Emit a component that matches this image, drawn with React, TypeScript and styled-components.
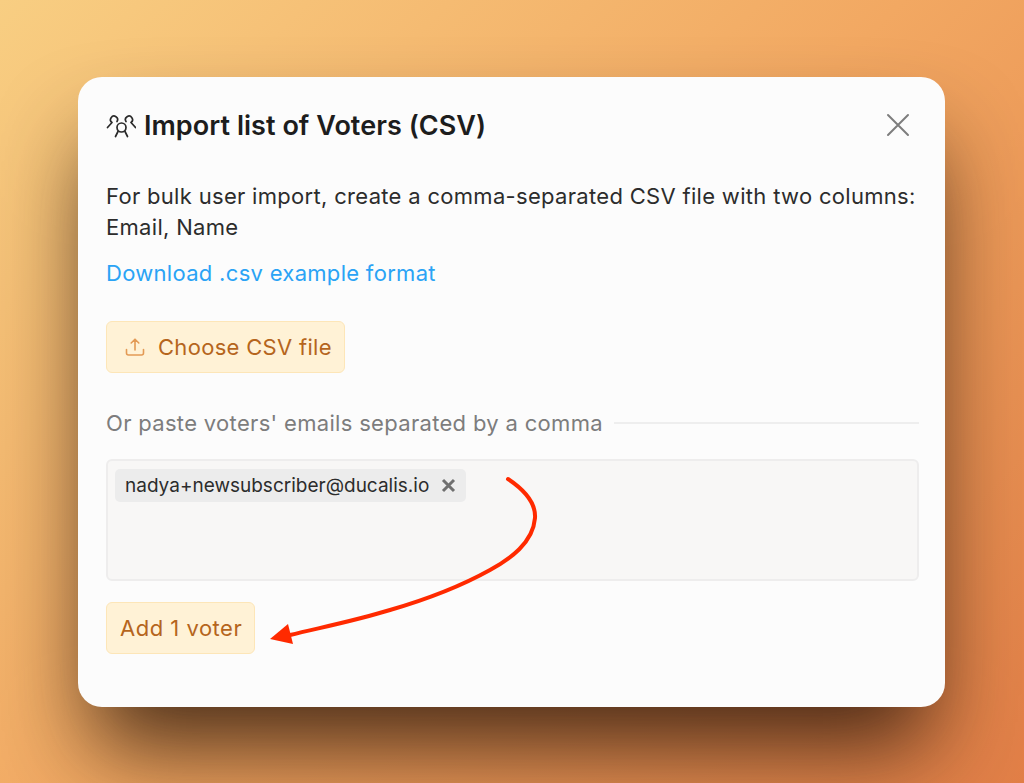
import React from "react";
import styled, { createGlobalStyle } from "styled-components";

const Global = createGlobalStyle`
  html, body { margin: 0; padding: 0; }
  body { font-family: Inter, "Noto Sans", sans-serif; }
`;

const Page = styled.div`
  width: 1024px;
  height: 783px;
  overflow: hidden;
  box-sizing: border-box;
  padding: 77px 79px 76px 78px;
  background: linear-gradient(135deg, #f8ce82 0%, #f2a862 50%, #e27f47 100%);
`;

const Modal = styled.div`
  position: relative;
  box-sizing: border-box;
  height: 630px;
  padding: 28px 26px 0 28px;
  border-radius: 24px;
  background: #fcfcfc;
  box-shadow: 0 54px 90px -14px rgba(40, 20, 10, 0.84);
  display: flex;
  flex-direction: column;
`;

const Header = styled.div`
  display: flex;
  align-items: center;
  height: 40px;
  gap: 8px;
`;

const Title = styled.h1`
  flex: 1;
  margin: 0;
  font-size: 27px;
  font-weight: 640;
  letter-spacing: 0.04px;
  color: #1d1d1d;
`;

const Close = styled.button`
  display: flex;
  width: 26px;
  height: 26px;
  padding: 0;
  margin-right: 8px;
  border: 0;
  background: none;
  color: #7d7d7d;
`;

const Body = styled.p`
  margin: 36px 0 0;
  font-size: 22px;
  letter-spacing: 0.31px;
  line-height: 31px;
  color: #2c2c2c;
`;

const Link = styled.a`
  margin-top: 15px;
  font-size: 22px;
  letter-spacing: 0.3px;
  line-height: 31px;
  color: #2aa3f5;
`;

const Button = styled.button<{ $mt: number; $ls: number }>`
  align-self: flex-start;
  display: flex;
  align-items: center;
  gap: 13px;
  height: 52px;
  margin-top: ${(p) => p.$mt}px;
  padding: 0 12px 0 13px;
  box-sizing: border-box;
  border: 1px solid #fde6b8;
  border-radius: 6px;
  background: #fff2d6;
  color: #b5651d;
  font-family: inherit;
  font-size: 22px;
  letter-spacing: ${(p) => p.$ls}px;
`;

const Divider = styled.div`
  display: flex;
  align-items: center;
  gap: 11px;
  margin-top: 34px;
  height: 31px;
  font-size: 22px;
  letter-spacing: 0.32px;
  color: #7d7d7d;
  white-space: nowrap;
  &::after {
    content: "";
    flex: 1;
    height: 2px;
    background: #eeeeee;
  }
`;

const Field = styled.div`
  margin-top: 21px;
  height: 122px;
  box-sizing: border-box;
  padding: 8px 7px;
  border: 2px solid #eeeded;
  border-radius: 6px;
  background: #f8f7f6;
`;

const Tag = styled.span`
  display: inline-flex;
  align-items: center;
  gap: 12px;
  height: 33px;
  padding: 0 10px;
  border-radius: 5px;
  background: #ececec;
  color: #2c2c2c;
  font-size: 19px;
`;

const TagX = styled.svg`
  width: 15px;
  height: 15px;
  color: #6f6f6f;
`;

const Arrow = styled.svg`
  position: absolute;
  left: 180px;
  top: 390px;
  width: 300px;
  height: 200px;
  pointer-events: none;
`;

export default function App() {
  return (
    <Page>
      <Global />
      <Modal>
        <Header>
          <svg width="30" height="26" viewBox="0 0 30 26" fill="none" stroke="#2a2a2a" strokeWidth="1.7" strokeLinecap="round" strokeLinejoin="round">
            <circle cx="15.500" cy="15.500" r="4.500" />
            <path d="M12 19.500L9.500 24.500M19 19.500L21.500 24.500" />
            <path d="M11 9.500A3.500 3.500 0 1 0 6 10.500L1.500 15.500" />
            <path d="M20 9.500A3.500 3.500 0 1 1 25 10.500L29.500 15.500" />
          </svg>
          <Title>Import list of Voters (CSV)</Title>
          <Close aria-label="Close">
            <svg width="26" height="26" viewBox="0 0 26 26" stroke="currentColor" strokeWidth="2" strokeLinecap="round">
              <path d="M3 3l20 20M23 3L3 23" />
            </svg>
          </Close>
        </Header>
        <Body>
          For bulk user import, create a comma-separated CSV file with two columns:
          <br />
          Email, Name
        </Body>
        <Link>Download .csv example format</Link>
        <Button $mt={32} $ls={0.3}>
          <svg width="20" height="20" viewBox="0 0 20 20" fill="none" stroke="#e39a55" strokeWidth="1.6" strokeLinecap="round" strokeLinejoin="round" style={{ marginLeft: 5 }}>
            <path d="M10 13V2.500M6.200 6L10 2.200 13.800 6M1.500 12.500V16a2 2 0 0 0 2 2h13a2 2 0 0 0 2-2v-3.500" />
          </svg>
          Choose CSV file
        </Button>
        <Divider>Or paste voters' emails separated by a comma</Divider>
        <Field>
          <Tag>
            nadya+newsubscriber@ducalis.io
            <TagX viewBox="0 0 15 15" stroke="currentColor" strokeWidth="3">
              <path d="M2 2l11 11M13 2L2 13" />
            </TagX>
          </Tag>
        </Field>
        <Button $mt={21} $ls={0.5}>Add 1 voter</Button>
        <Arrow viewBox="180 390 300 200" fill="none">
          <path d="M430 402C448 414 458 426 457 441C455 466 432 482 412 493C385 508 350 522 312 533C280 543 245 550 212 558" stroke="#ff2a00" strokeWidth="4" strokeLinecap="round" />
          <path d="M192 562L210 547L215 567Z" fill="#ff2a00" />
        </Arrow>
      </Modal>
    </Page>
  );
}
